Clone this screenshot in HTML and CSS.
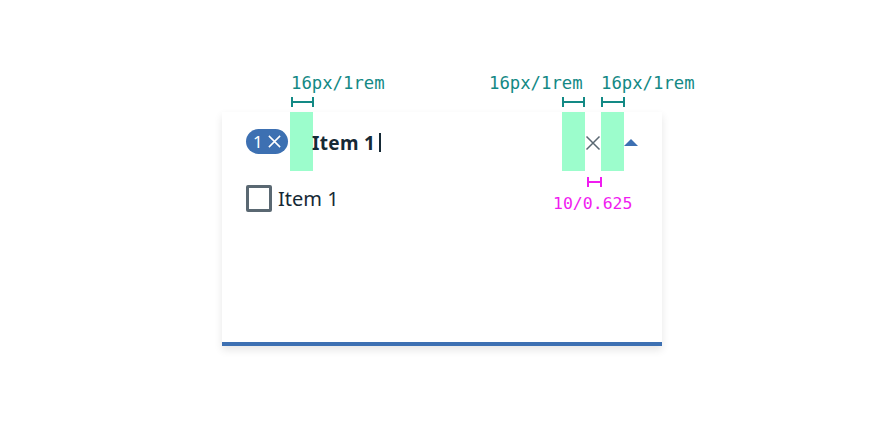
FILE: index.html
```html
<!DOCTYPE html>
<html lang="en">
<head>
<meta charset="utf-8">
<title>Multiselect spacing</title>
<link rel="stylesheet" href="styles.css">
</head>
<body>
<div class="stage">
  <div class="card">
    <div class="field">
      <span class="tag">
        <span class="tag-num">1</span>
        <svg class="tag-x" viewBox="0 0 16 16" width="15" height="15"><path d="M2 2 L14 14 M14 2 L2 14" stroke="#fff" stroke-width="1.6" fill="none"/></svg>
      </span>
      <span class="spacer spacer-left"></span>
      <span class="value">Item 1<span class="cursor"></span></span>
      <span class="grow"></span>
      <span class="spacer"></span>
      <svg class="clear" viewBox="0 0 16 16" width="16" height="16"><path d="M1.5 1.5 L14.5 14.5 M14.5 1.5 L1.5 14.5" stroke="#5a6872" stroke-width="1.5" fill="none"/></svg>
      <span class="spacer"></span>
      <svg class="caret" viewBox="0 0 14 7" width="14" height="7"><path d="M7 0 L14 7 L0 7 Z" fill="#3d70b2"/></svg>
    </div>
    <div class="list">
      <div class="option">
        <span class="box"></span>
        <span class="option-label">Item 1</span>
      </div>
    </div>
  </div>

  <div class="note note-a">16px/1rem</div>
  <div class="note note-b">16px/1rem</div>
  <div class="note note-c">16px/1rem</div>
  <div class="bracket bracket-a"></div>
  <div class="bracket bracket-b"></div>
  <div class="bracket bracket-c"></div>
  <div class="bracket bracket-m"></div>
  <div class="note note-m">10/0.625</div>
</div>
</body>
</html>
```

FILE: styles.css
```css
* { box-sizing: border-box; }
html, body { margin: 0; padding: 0; background: #ffffff; }
body { width: 885px; height: 425px; overflow: hidden; font-family: "Noto Sans", sans-serif; color: #152935; }

.stage { position: relative; width: 885px; height: 425px; padding: 112px 0 0 222px; }

.card {
  width: 440px;
  height: 234px;
  background: #ffffff;
  border-bottom: 4px solid #3d70b2;
  box-shadow: 0 4px 8px rgba(0, 0, 0, 0.1);
  display: flex;
  flex-direction: column;
}

.field {
  height: 59px;
  display: flex;
  align-items: center;
  padding: 0 24px;
  flex: none;
}

.tag {
  height: 25px;
  width: 42px;
  border-radius: 13px;
  background: #3d70b2;
  color: #ffffff;
  display: flex;
  align-items: center;
  padding-left: 7px;
  gap: 4px;
  font-size: 17px;
  flex: none;
}
.tag-num { line-height: 1; margin-top: -1px; }
.tag-x { display: block; }

.spacer { width: 23px; height: 59px; background: #9cfdcc; flex: none; }
.spacer-left { margin-left: 2px; margin-right: -1px; }

.value {
  font-weight: 700;
  font-size: 19px;
  letter-spacing: 0.3px;
  line-height: 24px;
  margin-top: 2px;
  display: flex;
  align-items: center;
}
.cursor { width: 2px; height: 19px; background: #152935; margin-left: 4px; }

.grow { flex: 1; }

.clear { display: block; flex: none; margin-top: 2px; }
.caret { display: block; flex: none; margin-top: 1px; }

.list { padding: 14px 24px 0; flex: 1; }
.option { display: flex; align-items: center; gap: 6px; }
.box {
  width: 26px;
  height: 27px;
  border: 3px solid #5a6872;
  border-radius: 2px;
  flex: none;
}
.option-label { font-size: 20px; line-height: 26px; }

.note {
  position: absolute;
  font-family: "DejaVu Sans Mono", monospace;
  font-size: 17.3px;
  line-height: 1;
  color: #138985;
  white-space: nowrap;
}
.note-a { left: 291px; top: 75px; }
.note-b { left: 489px; top: 75px; }
.note-c { left: 601px; top: 75px; }
.note-m { left: 553px; top: 196px; font-size: 16.5px; color: #f01cf0; }

.bracket {
  position: absolute;
  height: 10px;
  border-left: 2px solid #138985;
  border-right: 2px solid #138985;
}
.bracket::before {
  content: "";
  position: absolute;
  left: 0; right: 0;
  top: 4px;
  height: 2px;
  background: #138985;
}
.bracket-a { left: 291px; top: 97px; width: 23px; }
.bracket-b { left: 562px; top: 97px; width: 23px; }
.bracket-c { left: 601px; top: 97px; width: 24px; }
.bracket-m { left: 587px; top: 177px; width: 15px; border-color: #f01cf0; }
.bracket-m::before { background: #f01cf0; }
```
